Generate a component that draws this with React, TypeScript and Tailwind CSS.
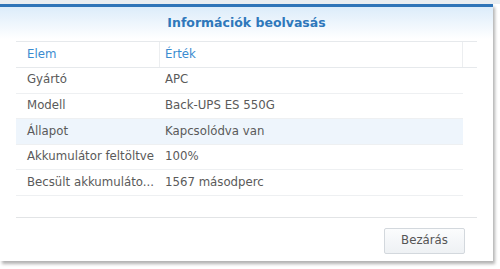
import React from "react";

const rows = [
  { k: "Gyártó", v: "APC" },
  { k: "Modell", v: "Back-UPS ES 550G" },
  { k: "Állapot", v: "Kapcsolódva van", active: true },
  { k: "Akkumulátor feltöltve", v: "100%" },
  { k: "Becsült akkumuláto...", v: "1567 másodperc" },
];

export default function App() {
  return (
    <div className="w-[500px] h-[269px] bg-white font-['DejaVu_Sans',sans-serif]">
      <div className="h-[4px] bg-[#e9edf1]" />
      <div className="w-[493px] h-[257px] flex flex-col bg-white border-t-[3px] border-[#2f74b8] shadow-[2px_3px_3px_rgba(0,0,0,0.3)]">
        <div className="h-[32px] flex items-center justify-center bg-gradient-to-b from-[#dcecfa] to-white">
          <span className="text-[12.5px] font-bold text-[#2f78bb]">Információk beolvasás</span>
        </div>
        <div className="mx-[16px] mt-[2px] border-t border-[#e6e9ec]">
          <div className="flex h-[26px] border-b border-[#e6e9ec] text-[11.75px] text-[#3b8bd0]">
            <div className="w-[144px] flex items-center pl-[11px] border-r border-[#eceef0]">Elem</div>
            <div className="flex-1 flex items-center pl-[5px] border-r border-[#eceef0]">Érték</div>
            <div className="w-[14px]" />
          </div>
          {rows.map((r) => (
            <div
              key={r.k}
              className={`flex h-[25.6px] mr-[14px] border-b border-[#eef0f2] text-[11.75px] text-[#5a5a5a] ${r.active ? "bg-[#eef5fc]" : ""}`}
            >
              <div className="w-[144px] flex items-center pl-[11px] whitespace-nowrap">{r.k}</div>
              <div className="flex-1 flex items-center pl-[5px]">{r.v}</div>
            </div>
          ))}
        </div>
        <div className="flex-1" />
        <div className="mx-[16px] border-t border-[#e2e4e6]" />
        <div className="flex justify-end pr-[28px] pt-[10px] pb-[7px]">
          <button className="w-[81px] h-[26px] rounded-[2px] border border-[#d3d8dd] bg-gradient-to-b from-[#fbfcfd] to-[#eef1f4] text-[11.75px] text-[#555]">
            Bezárás
          </button>
        </div>
      </div>
    </div>
  );
}
